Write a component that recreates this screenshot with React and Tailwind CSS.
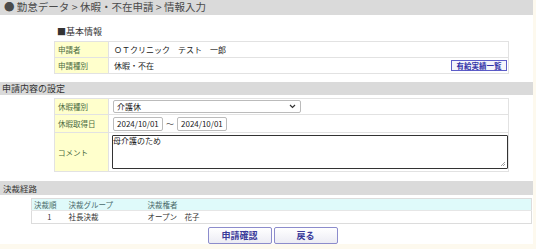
import React from 'react';

const font = { fontFamily: '"Noto Sans CJK JP", "Noto Sans", sans-serif' };

const Label = ({ children }) => (
  <td className="w-[54px] bg-[#ffffcc] border border-[#e2e2e2] pl-[3px] text-[7.5px] text-[#4a6a3e]">{children}</td>
);

const App = () => {
  return (
    <div className="w-[536px] h-[249px] bg-[#fdf9ee] overflow-hidden" style={font}>
      <div className="w-[533px] h-[244px] bg-white flex flex-col">
        {/* header */}
        <div className="h-[16px] bg-[#dadada] flex items-center pl-[4px] text-[10.5px] text-[#4a4a4a] leading-none whitespace-pre">
          ● 勤怠データ &gt; 休暇・不在申請 &gt; 情報入力
        </div>

        <div className="pl-[57px] pt-[12px] text-[9px] text-[#333] leading-none">■基本情報</div>

        <table className="ml-[54px] mt-[5px] w-[455px] border-collapse text-[8px] text-[#222]">
          <tbody>
            <tr className="h-[16px]">
              <Label>申請者</Label>
              <td className="border border-[#e2e2e2] pl-[5px]">ＯＴクリニック　テスト　一郎</td>
            </tr>
            <tr className="h-[16px]">
              <Label>申請種別</Label>
              <td className="border border-[#e2e2e2] pl-[5px]">
                <div className="flex items-center justify-between">
                  <span>休暇・不在</span>
                  <button className="mr-[1px] h-[11px] w-[56px] border border-[#5c5cc8] bg-[#f4f4fb] text-[7.5px] font-bold leading-none text-[#3232a8]">有給実績一覧</button>
                </div>
              </td>
            </tr>
          </tbody>
        </table>

        <div className="mt-[8px] h-[14px] bg-[#dadada] flex items-center pl-[2px] text-[9px] text-[#333] leading-none">申請内容の設定</div>

        <table className="ml-[54px] mt-[3px] w-[455px] border-collapse text-[8px] text-[#222]">
          <tbody>
            <tr className="h-[16px]">
              <Label>休暇種別</Label>
              <td className="border border-[#e2e2e2] pl-[4px]">
                <div className="w-[188px] h-[13px] border border-[#bbb] rounded-[2px] flex items-center justify-between pl-[3px] pr-[4px]">
                  <span>介護休</span>
                  <svg width="7" height="5" viewBox="0 0 7 5"><path d="M1 1 L3.5 3.5 L6 1" stroke="#333" strokeWidth="1.2" fill="none" /></svg>
                </div>
              </td>
            </tr>
            <tr className="h-[18px]">
              <Label>休暇取得日</Label>
              <td className="border border-[#e2e2e2] pl-[4px]">
                <div className="flex items-center gap-[3px]">
                  <div className="w-[50px] h-[14px] border border-[#bbb] rounded-[2px] flex items-center pl-[3px]">2024/10/01</div>
                  <span className="text-[#555]">～</span>
                  <div className="w-[50px] h-[14px] border border-[#bbb] rounded-[2px] flex items-center pl-[3px]">2024/10/01</div>
                </div>
              </td>
            </tr>
            <tr className="h-[37px]">
              <Label>コメント</Label>
              <td className="border border-[#e2e2e2] pl-[3px] py-[2px]">
                <div className="relative h-[34px] w-[396px] border-[1.5px] border-[#333] rounded-[1px] text-[8px] leading-[10px]">
                  母介護のため
                  <svg className="absolute right-[1px] bottom-[1px]" width="6" height="6" viewBox="0 0 6 6"><path d="M5 1 L1 5 M5 3 L3 5" stroke="#888" strokeWidth="0.8" /></svg>
                </div>
              </td>
            </tr>
          </tbody>
        </table>

        <div className="mt-[9px] h-[14px] bg-[#dadada] flex items-center pl-[3px] text-[8.5px] text-[#333] leading-none">決裁経路</div>

        <table className="ml-[31px] mt-[3px] w-[501px] border-collapse border border-[#dcdcdc] text-[7.5px] text-[#333]">
          <tbody>
            <tr className="h-[12px] bg-[#dffafa]">
              <td className="w-[35px] pl-[2px] text-[#4a6a6a]">決裁順</td>
              <td className="w-[80px] pl-[2px] text-[#4a6a6a]">決裁グループ</td>
              <td className="pl-[1px] text-[#4a6a6a]">決裁権者</td>
            </tr>
            <tr className="h-[13px] border-t border-[#e6e6e6]">
              <td className="text-center">1</td>
              <td className="pl-[2px]">社長決裁</td>
              <td className="pl-[1px]">オープン　花子</td>
            </tr>
          </tbody>
        </table>

        <div className="mt-[3px] flex justify-center gap-[2px] pl-[12px]">
          <button className="w-[64px] h-[17px] border border-[#8c8ccc] rounded-[2px] bg-gradient-to-b from-white to-[#ececf4] text-[9px] font-bold leading-none text-[#3a3a9a]">申請確認</button>
          <button className="w-[64px] h-[17px] border border-[#8c8ccc] rounded-[2px] bg-gradient-to-b from-white to-[#ececf4] text-[9px] font-bold leading-none text-[#3a3a9a]">戻る</button>
        </div>
      </div>
    </div>
  );
};

export default App;
